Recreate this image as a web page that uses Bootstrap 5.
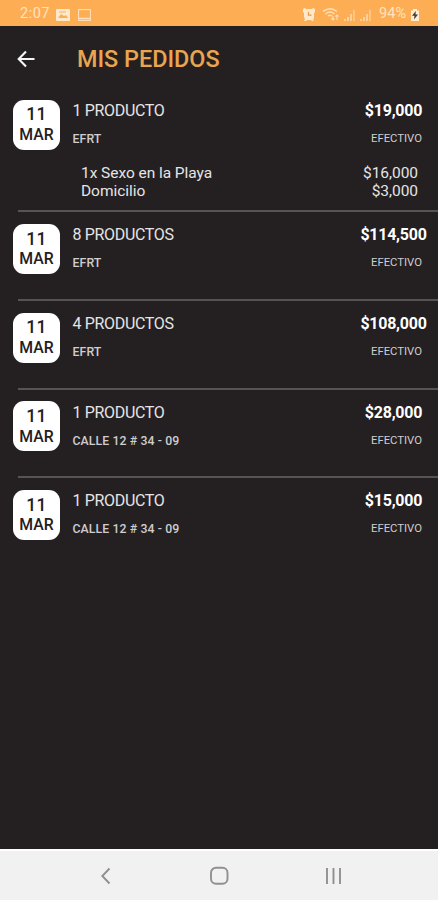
<!DOCTYPE html>
<html lang="es">
<head>
<meta charset="utf-8">
<meta name="viewport" content="width=device-width, initial-scale=1">
<title>Mis pedidos</title>
<link href="https://cdn.jsdelivr.net/npm/bootstrap@5.3.0/dist/css/bootstrap.min.css" rel="stylesheet">
<style>
body{background:#242021;color:#e6e4e5;font-family:Roboto,sans-serif;line-height:1}
.status-bar{height:26px;background:#fdae55;color:#ffe3c0;font-size:14.5px;padding:3px 18px 0 20px}
.status-time{letter-spacing:.5px;margin-right:-1.5px}
.app-bar{height:60px;padding:6px 0 0 17px}
.app-title{color:#e9a54f;font-size:23.4px;font-weight:500;letter-spacing:0;margin-left:42px}
.order{height:88.7px;padding:13.7px 10px 0 13px}
.order-detailed{height:124.3px}
.order + .order{background:linear-gradient(#575354,#575354) right top/calc(100% - 18px) 2px no-repeat}
.date-chip{width:47px;height:50px;border-radius:11px;background:#fff;color:#242021;font-weight:500;font-size:15.8px;line-height:20.5px;padding-top:4.8px}
.date-day{font-size:17.5px;letter-spacing:.3px}
.order-text{margin-left:12.5px;padding-top:2.4px}
.order-name{font-size:16px;line-height:18px;letter-spacing:-.33px}
.order-place{font-size:12.3px;line-height:14px;margin-top:12px;font-weight:500;color:#cfcdce;letter-spacing:.09px}
.order-sum{width:70px;padding-top:2.4px}
.order-price{font-size:16px;line-height:18px;font-weight:700;letter-spacing:-.25px;color:#fff;margin-right:-1px}
.order-pay{font-size:11.3px;line-height:14px;margin-top:12px;color:#cfcdce;padding-left:7px}
.order-lines{font-size:15.5px;line-height:18px;letter-spacing:-.05px;padding:14px 10px 0 68px}
.nav-bar{height:51px;background:#f1f1f1;border-top:2px solid #fff;padding-top:1px}
</style>
</head>
<body>
<div class="d-flex flex-column vh-100 overflow-hidden">
<header class="status-bar d-flex align-items-center flex-shrink-0">
<span class="status-time">2:07</span>
<svg class="ms-2" width="14" height="12" viewBox="0 0 14 12"><rect width="14" height="12" rx="1" fill="#ffe9cd"/><path d="M2 9l3-4 3 2 2-1 2 3z" fill="#fdae55"/><path d="M3 3h7" stroke="#fdae55"/></svg>
<svg class="ms-2" width="13" height="12" viewBox="0 0 13 12" fill="none" stroke="#ffe3c0"><rect x=".6" y=".6" width="11.8" height="10.8"/><path d="M1 9.5h11" stroke-width="1.4"/></svg>
<svg class="ms-auto" width="12" height="13" viewBox="0 0 12 13"><path d="M0 1l2-1 1 1h6l1-1 2 1v3l-1 1v5l-1 2 1 1H9l-1-1H4l-1 1H1l1-2-1-2V5L0 4z" fill="#ffe9cd"/><circle cx="6" cy="7" r="3.600" fill="#ffe9cd"/><path d="M5.500 4v3.200h3" fill="none" stroke="#e79947" stroke-width="1.200"/></svg>
<svg class="ms-2" width="17" height="13" viewBox="0 0 17 13" fill="none" stroke="#ffdfb6" stroke-width="1.400"><path d="M0 3.500Q7-2 14 3.500M2.500 6Q7 2 11.500 6M5 8Q7 6.500 9 8"/><path d="M7 10h.1" stroke-width="2"/><path d="M10 8v4M8.500 10.500L10 12l1.500-1.500M14 12V7M12.500 8.500L14 7l1.500 1.500" stroke-width="1.100"/></svg>
<svg class="ms-1" width="11" height="12" viewBox="0 0 11 12" stroke="#ffdcb0" stroke-width="1.500"><path d="M1 12v-2M4 12V8M7 12V5"/><path d="M10 12V1" opacity=".7"/></svg>
<svg class="ms-1" width="12" height="12" viewBox="0 0 12 12" stroke="#ffdcb0" stroke-width="1.500"><path d="M2 12v-2M5 12V8M8 12V5"/><path d="M11 12V1" opacity=".7"/></svg>
<span class="ms-1 ps-1">94%</span>
<svg class="ms-1" width="10" height="12" viewBox="0 0 10 12"><path d="M1 1.500h2V0h4v1.500h2V12H1z" fill="#ffedd5"/><path d="M5.800 2L2 6.700h2.500L4 10.500l4-5H5.500z" fill="#4c3927"/></svg>
</header>
<div class="app-bar d-flex align-items-center flex-shrink-0">
<svg width="18" height="18" viewBox="0 0 18 18" fill="none" stroke="#f5f5f5" stroke-width="2.100"><path d="M17.500 9H2M9 1.500L1.700 9 9 16.500"/></svg>
<h1 class="app-title mb-0">MIS PEDIDOS</h1>
</div>
<main class="flex-grow-1">
<article class="order order-detailed">
<div class="d-flex"><div class="date-chip text-center"><div class="date-day">11</div><div>MAR</div></div><div class="order-text flex-grow-1"><div class="order-name">1 PRODUCTO</div><div class="order-place">EFRT</div></div><div class="order-sum text-center"><div class="order-price">$19,000</div><div class="order-pay">EFECTIVO</div></div></div>
<div class="order-lines"><div class="d-flex justify-content-between"><span>1x Sexo en la Playa</span><span>$16,000</span></div><div class="d-flex justify-content-between"><span>Domicilio</span><span>$3,000</span></div></div>
</article>
<article class="order"><div class="d-flex"><div class="date-chip text-center"><div class="date-day">11</div><div>MAR</div></div><div class="order-text flex-grow-1"><div class="order-name">8 PRODUCTOS</div><div class="order-place">EFRT</div></div><div class="order-sum text-center"><div class="order-price">$114,500</div><div class="order-pay">EFECTIVO</div></div></div></article>
<article class="order"><div class="d-flex"><div class="date-chip text-center"><div class="date-day">11</div><div>MAR</div></div><div class="order-text flex-grow-1"><div class="order-name">4 PRODUCTOS</div><div class="order-place">EFRT</div></div><div class="order-sum text-center"><div class="order-price">$108,000</div><div class="order-pay">EFECTIVO</div></div></div></article>
<article class="order"><div class="d-flex"><div class="date-chip text-center"><div class="date-day">11</div><div>MAR</div></div><div class="order-text flex-grow-1"><div class="order-name">1 PRODUCTO</div><div class="order-place">CALLE 12 # 34 - 09</div></div><div class="order-sum text-center"><div class="order-price">$28,000</div><div class="order-pay">EFECTIVO</div></div></div></article>
<article class="order"><div class="d-flex"><div class="date-chip text-center"><div class="date-day">11</div><div>MAR</div></div><div class="order-text flex-grow-1"><div class="order-name">1 PRODUCTO</div><div class="order-place">CALLE 12 # 34 - 09</div></div><div class="order-sum text-center"><div class="order-price">$15,000</div><div class="order-pay">EFECTIVO</div></div></div></article>
</main>
<nav class="nav-bar d-flex justify-content-center align-items-center flex-shrink-0">
<svg width="234" height="20" viewBox="0 0 234 20" overflow="visible" fill="none" stroke="#909090" stroke-width="1.900"><path d="M7.500 2.500L.300 10l7.200 7.500"/><rect x="109" y="1.800" width="16.500" height="16" rx="5"/><path d="M225 2v16M231.500 2v16M238 2v16"/></svg>
</nav>
</div>
<script src="https://cdn.jsdelivr.net/npm/bootstrap@5.3.0/dist/js/bootstrap.bundle.min.js"></script>
</body>
</html>
